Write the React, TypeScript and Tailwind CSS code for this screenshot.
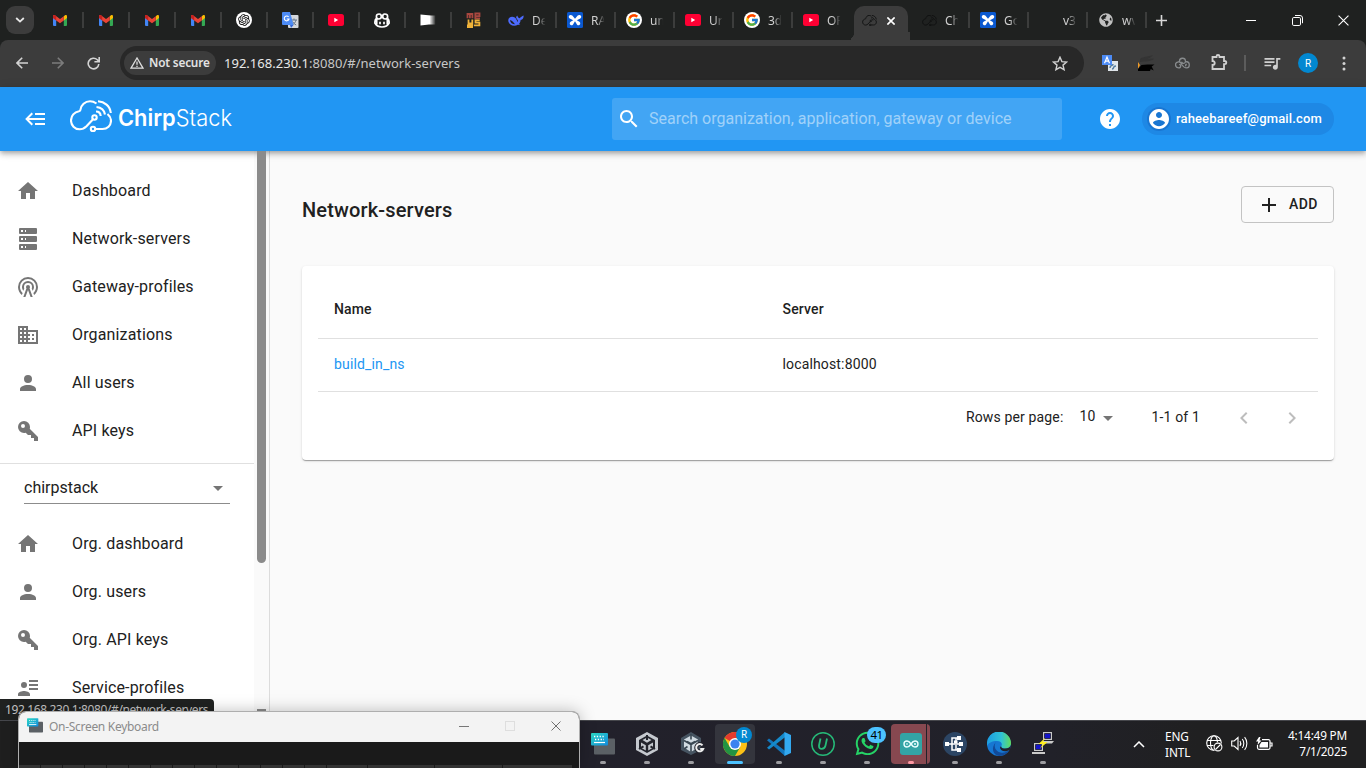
import React from "react";
import { FcGoogle } from "react-icons/fc";
import { FaWhatsapp, FaGlobeAmericas } from "react-icons/fa";
import { MdQueueMusic } from "react-icons/md";
import { RiOpenaiFill } from "react-icons/ri";

/* ---------- Material glyphs ---------- */

const paths = {
  home: "M10 20v-6h4v6h5v-8h3L12 3 2 12h3v8z",
  server:
    "M4,1H20A1,1 0 0,1 21,2V6A1,1 0 0,1 20,7H4A1,1 0 0,1 3,6V2A1,1 0 0,1 4,1M4,9H20A1,1 0 0,1 21,10V14A1,1 0 0,1 20,15H4A1,1 0 0,1 3,14V10A1,1 0 0,1 4,9M4,17H20A1,1 0 0,1 21,18V22A1,1 0 0,1 20,23H4A1,1 0 0,1 3,22V18A1,1 0 0,1 4,17M9,5H10V3H9V5M9,13H10V11H9V13M9,21H10V19H9V21M5,3V5H7V3H5M5,11V13H7V11H5M5,19V21H7V19H5Z",
  tower:
    "M12,10A2,2 0 0,1 14,12C14,12.5 13.82,12.94 13.53,13.29L16.7,22H14.57L12,14.93L9.43,22H7.3L10.47,13.29C10.18,12.94 10,12.5 10,12A2,2 0 0,1 12,10M12,8A4,4 0 0,0 8,12C8,12.5 8.1,13 8.28,13.46L7.4,15.86C6.53,14.81 6,13.47 6,12A6,6 0 0,1 12,6A6,6 0 0,1 18,12C18,13.47 17.47,14.81 16.6,15.86L15.72,13.46C15.9,13 16,12.5 16,12A4,4 0 0,0 12,8M12,4A8,8 0 0,0 4,12C4,14.36 5,16.5 6.64,17.94L5.92,19.94C3.54,18.11 2,15.23 2,12A10,10 0 0,1 12,2A10,10 0 0,1 22,12C22,15.23 20.46,18.11 18.08,19.94L17.36,17.94C19,16.5 20,14.36 20,12A8,8 0 0,0 12,4Z",
  domain:
    "M12 7V3H2v18h20V7H12zM6 19H4v-2h2v2zm0-4H4v-2h2v2zm0-4H4V9h2v2zm0-4H4V5h2v2zm4 12H8v-2h2v2zm0-4H8v-2h2v2zm0-4H8V9h2v2zm0-4H8V5h2v2zm10 12h-8v-2h2v-2h-2v-2h2v-2h-2V9h8v10zm-2-8h-2v2h2v-2zm0 4h-2v2h2v-2z",
  account:
    "M12,4A4,4 0 0,1 16,8A4,4 0 0,1 12,12A4,4 0 0,1 8,8A4,4 0 0,1 12,4M12,14C16.42,14 20,15.79 20,18V20H4V18C4,15.79 7.58,14 12,14Z",
  key: "M22,18V22H18V19H15V16H12L9.74,13.74C9.19,13.91 8.61,14 8,14A6,6 0 0,1 2,8A6,6 0 0,1 8,2A6,6 0 0,1 14,8C14,8.61 13.91,9.19 13.74,9.74L22,18M7,5A2,2 0 0,0 5,7A2,2 0 0,0 7,9A2,2 0 0,0 9,7A2,2 0 0,0 7,5Z",
  details:
    "M13,4H22V6H13V4M13,8H22V10H13V8M13,12H22V14H13V12M8,6A3,3 0 1,1 8,12A3,3 0 1,1 8,6M14,20H2V18C2,16 6,14.9 8,14.9C10,14.9 14,16 14,18V20Z",
  backburger:
    "M5,13L9,17L7.6,18.42L1.18,12L7.6,5.58L9,7L5,11H21V13H5M21,6V8H11V6H21M21,16V18H11V16H21Z",
  search:
    "M15.5 14h-.79l-.28-.27C15.41 12.59 16 11.11 16 9.5 16 5.91 13.09 3 9.5 3S3 5.91 3 9.5 5.91 16 9.5 16c1.61 0 3.09-.59 4.23-1.57l.27.28v.79l5 4.99L20.49 19l-4.99-5zm-6 0C7.01 14 5 11.99 5 9.5S7.01 5 9.5 5 14 7.01 14 9.5 11.99 14 9.5 14z",
  help: "M12 2C6.48 2 2 6.48 2 12s4.48 10 10 10 10-4.48 10-10S17.52 2 12 2zm1 17h-2v-2h2v2zm2.07-7.75l-.9.92C13.45 12.9 13 13.5 13 15h-2v-.5c0-1.1.45-2.1 1.17-2.83l1.24-1.26c.37-.36.59-.86.59-1.41 0-1.1-.9-2-2-2s-2 .9-2 2H8c0-2.21 1.79-4 4-4s4 1.79 4 4c0 .88-.36 1.68-.93 2.25z",
  avatar:
    "M12 2C6.48 2 2 6.48 2 12s4.48 10 10 10 10-4.48 10-10S17.52 2 12 2zm0 3c1.66 0 3 1.34 3 3s-1.34 3-3 3-3-1.34-3-3 1.34-3 3-3zm0 14.2c-2.5 0-4.71-1.28-6-3.22.03-1.99 4-3.08 6-3.08 1.99 0 5.97 1.09 6 3.08-1.29 1.94-3.5 3.22-6 3.22z",
  plus: "M19,13H13V19H11V13H5V11H11V5H13V11H19V13Z",
  drop: "M7 10l5 5 5-5z",
  left: "M15.41 7.41L14 6l-6 6 6 6 1.41-1.41L10.83 12z",
  right: "M10 6L8.59 7.41 13.17 12l-4.58 4.59L10 18l6-6z",
};

function Glyph({ name, className = "" }: { name: keyof typeof paths; className?: string }) {
  return (
    <svg viewBox="0 0 24 24" className={`shrink-0 fill-current ${className}`}>
      <path d={paths[name]} fillRule="evenodd" />
    </svg>
  );
}

/* ---------- Favicons ---------- */

const Gmail = () => (
  <svg width="14" height="11" viewBox="0 0 14 11">
    <path d="M0 1.5V10a1 1 0 0 0 1 1h2.2V4z" fill="#4285f4" />
    <path d="M14 1.5V10a1 1 0 0 1-1 1h-2.2V4z" fill="#34a853" />
    <path d="M10.8 1.2 12 .3c.9-.6 2 0 2 1.100v1.500l-3.200 2.500z" fill="#fbbc04" />
    <path d="M0 2.900V1.400C0 .3 1.200-.3 2 .3l5 3.800 3.800-2.900v4.200L7 8.300l-3.800-2.900z" fill="#ea4335" />
    <path d="M0 2.900V1.400C0 .3 1.200-.3 2 .3l1.200.9v4.200z" fill="#c5221f" />
  </svg>
);
const OpenAi = () => (
  <span className="flex size-4 items-center justify-center rounded-full bg-white text-black">
    <RiOpenaiFill size={14} />
  </span>
);
const Translate = () => (
  <svg width="17" height="16" viewBox="0 0 17 16">
    <rect x="6" y="3" width="10.500" height="13" rx="1" fill="#d5d8dc" />
    <path d="M9 8h6M12 6.500V8M14 8c-.5 2.500-2 4-4 5M10.500 9.500c.8 1.500 2 2.700 3.700 3.500" stroke="#66768a" fill="none" />
    <path d="M1 0h7l3.500 13H1a1 1 0 0 1-1-1V1a1 1 0 0 1 1-1z" fill="#4c8bf5" />
    <path d="M8 13h3.500L9 16z" fill="#3367d6" />
    <path d="M6.600 5A2.400 2.400 0 1 0 7 7H4.800" stroke="#fff" strokeWidth="1.100" fill="none" />
  </svg>
);
const YouTube = () => (
  <svg width="16" height="12" viewBox="0 0 16 12">
    <rect width="16" height="12" rx="2.500" fill="#ff0033" />
    <path d="M6.300 3.700v4.600L10.200 6z" fill="#fff" />
  </svg>
);
const Copilot = () => (
  <svg width="16" height="15" viewBox="0 0 16 15" fill="none" stroke="#fff" strokeWidth="1.700">
    <path d="M7.300 3.500C7.300 5.300 6.500 6 4.800 6 3 6 2.400 5.300 2.400 3.700 2.400 1.800 3.300 1 5.200 1 6.700 1 7.300 1.700 7.300 3.500zM8.700 3.500C8.700 5.300 9.500 6 11.200 6c1.800 0 2.400-.7 2.400-2.300C13.600 1.800 12.700 1 10.800 1 9.300 1 8.700 1.700 8.700 3.500z" />
    <path d="M2.500 5.500C1.300 6.500.9 7.500.9 9v1.200C2 12.500 5 14 8 14s6-1.500 7.100-3.800V9c0-1.500-.4-2.500-1.600-3.500M2.700 6v5.500M13.300 6v5.500" />
    <path d="M6 8.800v2.400M10 8.800v2.400" />
  </svg>
);
const Flag = () => (
  <svg width="16" height="12" viewBox="0 0 16 12">
    <defs>
      <linearGradient id="flag">
        <stop offset=".6" stopColor="#fff" />
        <stop offset="1" stopColor="#fff" stopOpacity="0.05" />
      </linearGradient>
    </defs>
    <path d="M.5.500 11 1.500h4.500v9H9l-8.500 1z" fill="url(#flag)" />
  </svg>
);
const Meys = () => (
  <svg width="16" height="16" viewBox="0 0 16 16" fill="none" strokeWidth="1.800">
    <path d="M1.500 6.300V2h2.400v4.300M3.900 2h2.500v4.300M9 4.200h4.500V1.500H9.300v4.800h4.700" stroke="#a8473f" />
    <path d="M2.500 7.500v4h3.800M6.300 7.500v5.800H1M13.700 8.300H9.500v2.300h3.900v2.700H8M1 15.200h6" stroke="#efb239" />
  </svg>
);
const Whale = () => (
  <svg width="16" height="13" viewBox="0 0 17 13" fill="#4d6bfe">
    <path d="M10 1.200c.3 1.800 1.200 2.800 2.700 3C13.300 2.700 15 2.300 16.600 1.300c0 2.600-.7 4.400-3.200 4.700-.1 2-.8 3.200-1.800 4.200l1.500 1.200-2.600-.3C6 13.200 1.300 11.500.4 7.500-.4 3.600 3.500 1 7.200 3.200 9 4.500 9.500 6.500 10.300 8c1.200-1.700-1.600-3.200-1.700-4.900C8.700 2.100 9.500 1.900 10 1.200zM2.100 6c.3 3 2.500 4.600 5.400 4.600C5.900 8.800 4.900 6.500 2.100 6z" fillRule="evenodd" />
  </svg>
);
const Butterfly = () => (
  <svg width="16" height="16" viewBox="0 0 16 16">
    <rect width="16" height="16" rx="1.500" fill="#0a58d0" />
    <path d="M8 6.800 5.300 3.600A2 2 0 1 0 3.200 6.800L6.200 8.300 3.600 9.800A1.900 1.900 0 1 0 6.500 11.800L8 9.200l1.500 2.600a1.900 1.900 0 1 0 2.900-2L9.800 8.300l3-1.500A2 2 0 1 0 10.700 3.600z" fill="#fff" />
  </svg>
);
const GoogleG = () => (
  <span className="flex size-4 items-center justify-center rounded-full bg-white">
    <FcGoogle size={14} />
  </span>
);
const CloudMark = ({ className, width = 1.200 }: { className: string; width?: number }) => (
  <svg viewBox="0 0 42 32" className={className} fill="none" stroke="currentColor" strokeWidth={width} strokeLinecap="butt">
    <path d="M26.500 3.500C24 1.700 21.800 1.200 20 1.200c-5 0-9 3.800-9.500 8.300 0 1-.3 1.500-1.500 1.800C4.300 12 1 15.800 1 20.500s3.700 8.800 8.700 8.800c3 0 5-1.200 6.800-3l6.300-6.800" />
    <circle cx="24.500" cy="17.500" r="2.200" />
    <circle cx="23" cy="29" r="2.200" />
    <path d="M25.500 29H32.500c4.800 0 8.500-3.500 8.500-8.200 0-3-1.300-5-3.500-6.800M26 11.500c3 0 4.500 1.800 4.700 4.500M26.500 7c5 .5 7.800 3.500 8.500 7.500M28 1.300c6.500.500 12 4.500 12.800 11.700" />
  </svg>
);
const DarkCloud = () => <CloudMark className="h-[11px] w-[15px] text-[#101111]" width={2.600} />;
const Blank = () => <span className="size-4" />;
const Earth = () => <FaGlobeAmericas size={14} color="#c0c0c0" />;

type Tab = { icon: () => React.ReactElement; label: string; active?: boolean };
const pinned = [Gmail, Gmail, Gmail, Gmail, OpenAi, Translate, YouTube, Copilot, Flag, Meys];
const tabs: Tab[] = [
  { icon: Whale, label: "De" },
  { icon: Butterfly, label: "RA" },
  { icon: GoogleG, label: "un" },
  { icon: YouTube, label: "Ur" },
  { icon: GoogleG, label: "3d" },
  { icon: YouTube, label: "OF" },
  { icon: DarkCloud, label: "", active: true },
  { icon: DarkCloud, label: "Ch" },
  { icon: Butterfly, label: "Go" },
  { icon: Blank, label: "v3" },
  { icon: Earth, label: "wv" },
];

const Cross = ({ className = "" }: { className?: string }) => (
  <svg viewBox="0 0 10 10" className={className} stroke="currentColor" fill="none">
    <path d="M.5.500l9 9M9.500.500l-9 9" />
  </svg>
);

function TabStrip() {
  return (
    <div className="flex h-10 bg-[#1f2120] text-[#d0d0d0]">
      <div className="flex w-[37px] pl-1.5 pt-1.5">
        <div className="flex size-7 items-center justify-center rounded-[9px] bg-[#3c3c3c]">
          <svg width="10" height="6" viewBox="0 0 10 6" fill="none" stroke="#e8e8e8" strokeWidth="1.800">
            <path d="M1.200 1 5 4.600 8.800 1" />
          </svg>
        </div>
      </div>
      {pinned.map((Icon, i) => (
        <div key={i} className="flex h-10 w-[46px] items-center">
          <div className="flex w-[45px] shrink-0 items-center justify-center pl-px">
            <Icon />
          </div>
          <div className="h-4 w-0.5 shrink-0 bg-[#3c3d3c]" />
        </div>
      ))}
      {tabs.map(({ icon: Icon, label, active }, i) =>
        active ? (
          <div key={i} className="flex w-[59px] items-end">
            <div className="h-2 w-[3px] shrink-0 bg-[radial-gradient(circle_at_-5px_0px,#1f2120_8px,#3c3c3c_8.5px)]" />
            <div className="flex h-[34px] w-[54px] shrink-0 items-center rounded-t-[10px] bg-[#3c3c3c] pb-1.5 pl-2 pt-0">
              <Icon />
              <Cross className="ml-2.5 mt-0.5 size-2 text-white stroke-[2]" />
            </div>
            <div className="h-2 w-0.5 shrink-0 bg-[#3c3c3c]" />
          </div>
        ) : (
          <div key={i} className="flex w-[59px] items-center pl-[11px]">
            <div className="flex w-4 shrink-0 justify-center">
              <Icon />
            </div>
            <div className="ml-2 w-4 whitespace-nowrap pt-px font-['Noto_Sans',sans-serif] text-xs [mask-image:linear-gradient(to_right,black_35%,transparent_85%)]">
              {label}
            </div>
            {tabs[i + 1]?.active ? null : <div className="-mr-px ml-auto h-4 w-0.5 shrink-0 bg-[#3c3d3c]" />}
          </div>
        )
      )}
      <div className="flex w-[30px] items-center justify-center">
        <svg width="11" height="11" viewBox="0 0 11 11" stroke="#d8d8d8" strokeWidth="1.600">
          <path d="M5.500 0v11M0 5.500h11" />
        </svg>
      </div>
      <div className="ml-auto flex w-[138px] items-center">
        <div className="flex w-[46px] justify-center">
          <div className="h-px w-2.5 bg-white" />
        </div>
        <div className="flex w-[46px] justify-center">
          <svg width="11" height="11" viewBox="0 0 11 11" fill="none" stroke="#fff">
            <rect x=".5" y="2.500" width="8" height="8" rx="1.300" />
            <path d="M3 .5h5a2.500 2.500 0 0 1 2.500 2.500v5.200" />
          </svg>
        </div>
        <div className="flex w-[46px] justify-center">
          <Cross className="size-[11px] text-white" />
        </div>
      </div>
    </div>
  );
}

function Toolbar() {
  return (
    <div className="bg-[#1f2120]">
      <div className="flex h-[47px] items-center rounded-t-lg bg-[#3c3c3c] pb-px">
        <div className="flex w-[120px] items-center pl-4">
          <svg width="12" height="12" viewBox="0 0 12 12" fill="none" stroke="#d3d3d3" strokeWidth="1.600">
            <path d="M12 6H1M6.200.800 1 6l5.200 5.200" />
          </svg>
          <svg width="12" height="12" viewBox="0 0 12 12" fill="none" stroke="#7c7c7c" strokeWidth="1.600" className="ml-6">
            <path d="M0 6h11M5.800.800 11 6l-5.200 5.200" />
          </svg>
          <svg width="13" height="13" viewBox="0 0 13 13" fill="none" stroke="#d3d3d3" strokeWidth="1.600" className="ml-[23px]">
            <path d="M11.800 7A5.300 5.300 0 1 1 10.300 2.800L12 4.500M12.200 0v4.800H7.400" />
          </svg>
        </div>
        <div className="flex h-[34px] w-[964px] items-center rounded-full bg-[#282828] pl-1 pr-4 font-['Noto_Sans',sans-serif]">
          <div className="flex h-6 w-[92px] items-center rounded-full bg-[#3c3c3c] pl-[6px]">
            <svg width="14" height="12" viewBox="0 0 14 12" fill="none" stroke="#dedede" strokeWidth="1.300">
              <path d="M7 1 1 11.200h12zM7 4.500v3.300M7 8.800v1.200" />
            </svg>
            <span className="ml-[5px] whitespace-nowrap text-[11.800px] font-semibold tracking-[-0.18px] text-[#e3e3e3]">Not secure</span>
          </div>
          <div className="ml-2 mt-0.5 whitespace-nowrap text-[13px] tracking-[0.02px] text-[#c7c7c7]">
            <span className="text-[#e8e8e8]">192.168.230.1</span>:8080/#/network-servers
          </div>
          <svg width="16" height="15" viewBox="0 0 16 15" fill="none" stroke="#d0d0d0" strokeWidth="1.400" className="ml-auto">
            <path d="M8 1.200 9.900 5.600l4.700.4-3.600 3.100 1.100 4.600L8 11.300l-4.100 2.400L5 9.100 1.400 6l4.700-.4z" />
          </svg>
        </div>
        <div className="flex grow items-center pl-[18px]">
          <svg width="16" height="17" viewBox="0 0 16 17">
            <rect x="6" y="6" width="10" height="10" fill="#dfe5ea" />
            <path d="M8 13c0-4 3-1 3-4M10 14c3 0 0-3 4-3" stroke="#527ca0" strokeWidth="1.500" fill="none" />
            <rect width="10" height="10" fill="#4c8bf5" />
            <path d="M2.500 8.200 5 2l2.500 6.200M3.400 6.200h3.200" stroke="#fff" strokeWidth="1.200" fill="none" />
          </svg>
          <svg width="17" height="16" viewBox="0 0 17 16" className="ml-5">
            <path d="M2 4c3-3 9-2 13-4-2 3-4 3-6 4 3 0 6-1 7 0-4 3-9 2-14 3z" fill="#343434" />
            <path d="M0 7l2 3-2 4z" fill="#f09a25" />
            <path d="M0 16V14L3.500 10l6-.500 7 0-2.800 2 2 4-3-1.500-.7 2z" fill="#000" />
          </svg>
          <svg width="15" height="12" viewBox="0 0 15 12" fill="none" stroke="#888b8d" strokeWidth="1.300" className="ml-5">
            <path d="M6.500 7.500a3 3 0 1 0-3 3.300c1.500 0 2.200-.8 2.200-1.900 0-1-.8-1.500-1.600-1.300M4.500 4.500A3 3 0 0 1 10.500 4c0 1.600-1 2.500-2.200 2.400-1 0-1.500-.9-1.200-1.700M10.500 4.500c2 0 3.800 1.400 3.800 3.500 0 1.700-1.200 2.900-2.700 2.900-1.500 0-3.500-1.200-5-3.400M11.800 7.500c-1.200-.2-1.600 1.200-.6 1.500" />
          </svg>
          <svg width="17" height="16" viewBox="0 0 17 16" fill="none" stroke="#d0d0d0" strokeWidth="1.800" className="-mt-0.5 ml-[21px]">
            <path d="M1.500 3h4v-.5a1.500 1.500 0 0 1 3 0V3h4.500v4h.7a1.600 1.600 0 0 1 0 3.200H13V15H1.500v-4C4.500 11 4.500 7 1.500 7z" />
          </svg>
          <div className="ml-4 h-4 w-0.5 bg-[#5c5c5c]" />
          <MdQueueMusic size={20} color="#d0d0d0" className="ml-4" />
          <div className="ml-4 flex size-5 items-center justify-center rounded-full bg-[#0288d1] font-['Roboto',sans-serif] text-[10px] text-white">R</div>
          <svg width="4" height="15" viewBox="0 0 4 15" fill="#d3d3d3" className="ml-6">
            <circle cx="2" cy="2" r="1.500" />
            <circle cx="2" cy="7.500" r="1.500" />
            <circle cx="2" cy="13" r="1.500" />
          </svg>
        </div>
      </div>
    </div>
  );
}

/* ---------- ChirpStack application ---------- */

function AppBar() {
  return (
    <header className="relative z-10 flex h-16 items-center bg-[#2196f3] pl-6 text-white shadow-[0_2px_4px_-1px_rgba(0,0,0,.2),0_4px_5px_rgba(0,0,0,.14),0_1px_10px_rgba(0,0,0,.12)]">
      <Glyph name="backburger" className="size-6" />
      <div className="-mt-1.5 ml-[22px] flex items-center">
        <CloudMark className="h-8 w-[42px]" width={2.1} />
        <svg width="116" height="30" viewBox="0 0 116 30" className="ml-1.5 mt-1.5 fill-white font-['Inter',sans-serif]">
          <text x="0" y="22" fontSize="23" textLength="114" lengthAdjust="spacingAndGlyphs">
            <tspan fontWeight="600">Chirp</tspan>
            <tspan fontWeight="300">Stack</tspan>
          </text>
        </svg>
      </div>
      <div className="ml-auto mr-9 flex h-[42px] w-[450px] items-center rounded-[3px] bg-white/15 pl-[5px]">
        <Glyph name="search" className="size-6" />
        <span className="ml-2 whitespace-nowrap text-base text-white/50">Search organization, application, gateway or device</span>
      </div>
      <Glyph name="help" className="mr-5 size-6" />
      <div className="mr-8 flex h-8 w-[192px] items-center rounded-full bg-[#1e88e5] pl-[5px]">
        <Glyph name="avatar" className="size-6 rounded-full bg-[#1976d2]" />
        <span className="ml-[5px] whitespace-nowrap text-[13px] font-medium tracking-[0.14px]">raheebareef@gmail.com</span>
      </div>
    </header>
  );
}

const globalLinks: { icon: keyof typeof paths; label: string }[] = [
  { icon: "home", label: "Dashboard" },
  { icon: "server", label: "Network-servers" },
  { icon: "tower", label: "Gateway-profiles" },
  { icon: "domain", label: "Organizations" },
  { icon: "account", label: "All users" },
  { icon: "key", label: "API keys" },
];
const orgLinks: { icon: keyof typeof paths; label: string }[] = [
  { icon: "home", label: "Org. dashboard" },
  { icon: "account", label: "Org. users" },
  { icon: "key", label: "Org. API keys" },
  { icon: "details", label: "Service-profiles" },
];

function LinkList({ items }: { items: typeof globalLinks }) {
  return (
    <ul>
      {items.map((it) => (
        <li key={it.label} className="flex h-12 items-center pl-4">
          <Glyph name={it.icon} className="size-6 text-[#757575]" />
          <span className="ml-8 text-base tracking-[0.15px]">{it.label}</span>
        </li>
      ))}
    </ul>
  );
}

function Sidebar() {
  return (
    <nav className="flex h-[617px] w-[270px] shrink-0 overflow-hidden border-r border-[#dcdcdc] bg-white">
      <div className="w-[254px]">
        <div className="h-[313px] border-b border-[#e0e0e0] pt-4">
          <LinkList items={globalLinks} />
        </div>
        <div className="ml-6 flex h-10 w-[206px] items-center justify-between border-b border-[#8c8c8c] pt-[9px]">
          <span className="text-base tracking-normal">chirpstack</span>
          <Glyph name="drop" className="-mt-px size-6 text-[#757575]" />
        </div>
        <div className="pt-4">
          <LinkList items={orgLinks} />
        </div>
      </div>
      <div className="flex w-[15px] flex-col items-center bg-[#fafafa]">
        <div className="relative z-20 h-[412px] w-[9px] rounded-b-full bg-[#8b8b8b]" />
        <div className="mt-[146px] h-2 w-[9px] bg-[#8b8b8b]" />
      </div>
    </nav>
  );
}

function Content() {
  return (
    <main className="flex grow flex-col bg-[#fafafa] px-8 pt-[35px]">
      <div className="flex h-[37px] justify-between">
        <h1 className="mt-2 text-xl font-medium leading-8 tracking-[0.15px]">Network-servers</h1>
        <button className="flex h-[37px] w-[93px] items-center rounded border border-[#c3c3c3] pl-[15px] text-sm font-medium tracking-[0.4px]">
          <Glyph name="plus" className="mr-2 size-6" />
          <span className="-mt-0.5">ADD</span>
        </button>
      </div>
      <section className="mt-[43px] h-[194px] rounded bg-white p-4 text-sm tracking-[0.15px] shadow-[0_2px_1px_-1px_rgba(0,0,0,.2),0_1px_1px_rgba(0,0,0,.14),0_1px_3px_rgba(0,0,0,.12)]">
        <div className="flex h-[57px] items-center border-b border-[#e0e0e0] pl-4 pb-[3px] font-medium">
          <span className="w-[448.5px]">Name</span>
          <span>Server</span>
        </div>
        <div className="flex h-[53px] items-center border-b border-[#e0e0e0] pl-4 pb-0.5">
          <a className="w-[448.5px] text-[#2196f3]">build_in_ns</a>
          <span>localhost:8000</span>
        </div>
        <div className="flex h-[52px] items-center justify-end pb-[3px] pr-[14px]">
          <span>Rows per page:</span>
          <span className="ml-4 -mt-0.5">10</span>
          <Glyph name="drop" className="mt-0.5 size-6 text-[#757575]" />
          <span className="ml-[32px]">1-1 of 1</span>
          <Glyph name="left" className="ml-8 mt-0.5 size-6 text-[#bdbdbd]" />
          <Glyph name="right" className="ml-6 mt-0.5 size-6 text-[#bdbdbd]" />
        </div>
      </section>
    </main>
  );
}

/* ---------- Windows shell ---------- */

const KeyboardIcon = ({ className }: { className: string }) => (
  <svg viewBox="0 0 24 22" className={className}>
    <defs>
      <linearGradient id="kb" x1="0" x2="1" y1="0" y2="1">
        <stop stopColor="#2bd9c3" />
        <stop offset="1" stopColor="#1389dd" />
      </linearGradient>
    </defs>
    <rect x="3" y="5.500" width="21" height="16" rx="1" fill="#5b6065" />
    <rect width="17" height="12.500" rx="1" fill="url(#kb)" />
    <path d="M3 3.500h11M4 6.500h9" stroke="#fff" strokeWidth="1.300" strokeDasharray="1.300 1.500" />
    <path d="M3 9.500h11" stroke="#fff" strokeWidth="1.200" />
  </svg>
);
const Cube = () => (
  <svg width="22" height="24" viewBox="0 0 22 24">
    <path d="M11 0 22 6v12l-11 6L0 18V6z" fill="#c5c9cf" />
    <path d="M11 3.500 19 8v8.500L11 21l-8-4.500V8z" fill="#23252d" />
    <path d="M11 5.500 15.500 8 11 10.800 6.500 8zM5 10.500 9.800 13.300v5.200L5 15.800zM17 10.500l-4.800 2.800v5.200L17 15.800z" fill="#c5c9cf" />
    <path d="M11 3v5M3 17l4.500-2.700M19 17l-4.500-2.700" stroke="#23252d" strokeWidth="2" />
  </svg>
);
const CubeG = () => (
  <svg width="24" height="24" viewBox="0 0 24 24" className="ml-1">
    <path d="M10 0 20 6v12l-10 5L0 18V6z" fill="#465461" />
    <path d="M10 3.500 17 7.500v8L10 20l-7-4.500v-8z" fill="#d1dbe2" />
    <path d="M10 2v5.500M10 20v-7M3 8.500l7 4 7-4M3 17l3.500-2.500M6 9.500l4 2.300 4-2.300" stroke="#3a4853" strokeWidth="1.600" fill="none" />
    <path d="M21.500 13.300a3.600 3.600 0 1 0 .7 3.700h-3" stroke="#252730" strokeWidth="4" fill="none" />
    <path d="M21.500 13.300a3.600 3.600 0 1 0 .7 3.700h-3" stroke="#eee" strokeWidth="2" fill="none" />
  </svg>
);
const Chrome = () => (
  <svg width="24" height="24" viewBox="0 0 24 24">
    <circle cx="12" cy="12" r="12" fill="#fbc116" />
    <path d="M12 12 1.600 6A12 12 0 0 1 22.400 6H12z" fill="#e33b2e" />
    <path d="M1.600 6A12 12 0 0 0 12 24l5.200-9L12 12 6.800 15z" fill="#229342" />
    <circle cx="12" cy="12" r="6" fill="#fff" />
    <circle cx="12" cy="12" r="4.600" fill="#3b82f0" />
  </svg>
);
const VsCode = () => (
  <svg width="24" height="24" viewBox="0 0 24 24">
    <path d="M0 8.300 2 6.500l16 12.200V24z" fill="#1276bd" />
    <path d="M0 15.700 2 17.500 18 5.300V0z" fill="#158acb" />
    <path d="M17.500 0 24 3v18l-6.500 3z" fill="#33a9f0" />
  </svg>
);
const UCircle = () => (
  <svg width="24" height="24" viewBox="0 0 24 24" fill="none">
    <circle cx="12" cy="12" r="11.200" stroke="#26b978" strokeWidth="1.500" />
    <path d="M9.500 6.500 8 13.500c-.6 4.500 5.500 4.500 6.500 0L16 6.500" stroke="#26b978" strokeWidth="1.800" />
  </svg>
);
const Arduino = () => (
  <svg width="22" height="22" viewBox="0 0 22 22" fill="none">
    <rect width="22" height="22" rx="3" fill="#33a4a5" />
    <path d="M11 11C9.500 8.700 8.300 8 7 8a3 3 0 0 0 0 6c1.300 0 2.500-.7 4-3s2.700-3 4-3a3 3 0 0 1 0 6c-1.300 0-2.500-.7-4-3z" stroke="#e9ffff" strokeWidth="1.400" />
    <path d="M6 11h2M14 11h2M15 10v2" stroke="#e9ffff" />
  </svg>
);
const Network = () => (
  <svg width="24" height="24" viewBox="0 0 24 24">
    <circle cx="12" cy="12" r="12" fill="#2c4564" />
    <path d="M5 12h13M9 12V6h7M9 12v6h7M13 6v5M13 18v-5" stroke="#fff" strokeWidth="1.500" fill="none" />
    <path d="M2 10h4v4H2zM14 4h4v4h-4zM16 10h4v4h-4zM14 16h4v4h-4zM11 8.500h3.500v3H11z" fill="#fff" />
  </svg>
);
const Edge = () => (
  <svg width="24" height="24" viewBox="0 0 24 24">
    <defs>
      <linearGradient id="ed" x1="0" x2="1">
        <stop stopColor="#1b9de2" />
        <stop offset=".6" stopColor="#2fc2d6" />
        <stop offset="1" stopColor="#62db5b" />
      </linearGradient>
    </defs>
    <circle cx="12" cy="12" r="12" fill="#1677d2" />
    <path d="M0 12A12 12 0 0 1 24 11c0 4-3 5.500-6 5.500-3.500 0-4.500-1.500-3.500-3 1-2-.5-4.500-4.500-4.500C5 9 1 11 0 14z" fill="url(#ed)" />
    <path d="M9 10c-3 4-.5 9.500 4.500 10.500 3.500.7 6.500-.5 8.800-2.500A12 12 0 0 1 12 24C6 23 3.500 16 9 10z" fill="#114a99" />
    <path d="M14.500 13.500c-1 1.500 0 3 3.500 3 3 0 5.200-1 6-3.500l-.8 4.500c-4 3-10 2-10.200-2z" fill="#222229" />
  </svg>
);
const Putty = () => (
  <svg width="23" height="23" viewBox="0 0 23 23">
    <path d="M11 0h9v8h-9zM10 9h12l-2 2.500h-9zM2 11h9v8H2zM0 20h13v2H0z" fill="#c9c9c9" />
    <path d="M12.500 1.500H18.500v5h-6zM3.500 12.500h6v5h-6z" fill="#1414c8" stroke="#000" strokeWidth=".6" />
    <path d="M13 6 6.500 12H11L8 16.500l7.500-6.500H11z" fill="#ffee20" />
  </svg>
);

function TaskItem({ children, active = false }: { children: React.ReactNode; active?: boolean }) {
  return (
    <div className="flex h-12 w-11 flex-col items-center pt-[3px]">
      <div className={`relative flex h-10 w-10 items-center justify-center rounded ${active ? "bg-[#34353d]" : ""}`}>
        {children}
        <span className={`absolute bottom-0 h-[3px] rounded-full ${active ? "w-4 bg-[#4cc2ff]" : "w-1.5 bg-[#9c9ca0]"}`} />
      </div>
    </div>
  );
}

function Taskbar() {
  return (
    <footer className="absolute bottom-0 left-0 z-30 flex h-12 w-[1366px] items-center border-t border-[#46474c] bg-[linear-gradient(to_right,#1f1f1f_0px,#1f1f1f_19px,#22212b_579px,#212129_1050px,#202021_1200px)] pl-[581px] font-['Noto_Sans',sans-serif] text-white">
      <TaskItem><KeyboardIcon className="h-[22px] w-6" /></TaskItem>
      <TaskItem><Cube /></TaskItem>
      <TaskItem><CubeG /></TaskItem>
      <TaskItem active>
        <Chrome />
        <span className="absolute right-[3px] top-[3px] flex size-4 items-center justify-center rounded-full bg-[#0288d1] text-[10px]">R</span>
      </TaskItem>
      <TaskItem><VsCode /></TaskItem>
      <TaskItem><UCircle /></TaskItem>
      <TaskItem>
        <FaWhatsapp size={27} color="#25d366" />
        <span className="absolute right-px top-[3px] flex h-4 w-[19px] items-center justify-center rounded-full bg-[#4cc2ff] text-[11.500px] tracking-[-0.5px] text-black">41</span>
      </TaskItem>
      <div className="flex h-12 w-11 pl-0.5 pt-[3px]">
        <div className="relative flex h-10 w-[39px] shrink-0 items-center justify-center rounded bg-[linear-gradient(to_right,#874850_0px,#874850_35px,#222129_35px,#222129_36px,#874850_36px)]">
          <Arduino />
          <span className="absolute bottom-0 left-[17px] h-[3px] w-1.5 rounded-full bg-[#ff99a4]" />
        </div>
      </div>
      <TaskItem><Network /></TaskItem>
      <TaskItem><Edge /></TaskItem>
      <TaskItem><Putty /></TaskItem>
      <svg width="12" height="7" viewBox="0 0 12 7" fill="none" stroke="#fff" strokeWidth="1.500" className="ml-[68px]">
        <path d="M1 6l5-5 5 5" />
      </svg>
      <div className="-mt-0.5 ml-5 text-[11.800px] leading-4 tracking-[-0.1px]">
        <div>ENG</div>
        <div>INTL</div>
      </div>
      <div className="-mt-0.5 ml-auto flex items-center gap-2">
        <svg width="17" height="17" viewBox="0 0 17 17" fill="none" stroke="#fff" strokeWidth="1.100">
          <circle cx="8" cy="8" r="7.300" />
          <ellipse cx="8" cy="8" rx="3.500" ry="7.300" />
          <path d="M1 5.500h14M1 10.500h7" />
          <circle cx="12" cy="12" r="4.800" fill="#202021" stroke="none" />
          <circle cx="12" cy="12" r="3.900" />
          <path d="M9.500 14.500l5-5" />
        </svg>
        <svg width="17" height="15" viewBox="0 0 17 15" fill="none" stroke="#fff" strokeWidth="1.100">
          <path d="M.7 5h2.500L7 1.500v12L3.200 10H.7zM9 5c1 1.500 1 3.500 0 5M11.300 3c2 2.500 2 6.500 0 9M13.600 1.200c3 3.500 3 9 0 12.600" />
        </svg>
        <svg width="17" height="14" viewBox="0 0 17 14" fill="none" stroke="#fff" strokeWidth="1.200">
          <path d="M6 2.700h6.500a1.500 1.500 0 0 1 1.500 1.500v6.600a1.500 1.500 0 0 1-1.500 1.500H3a1.500 1.500 0 0 1-1.500-1.500V8M14.500 6H16v3h-1.500" />
          <path d="M5.500 5H12v5.500H3.500V8z" fill="#fff" stroke="none" />
          <path d="M3 0 0 4.500h2.200L1.500 8 5.500 3.500H3.500L4.500 0z" fill="#fff" stroke="none" />
        </svg>
      </div>
      <div className="-mt-[3px] ml-[15px] mr-[19px] text-right text-[11.800px] leading-4 tracking-[-0.2px]">
        <div>4:14:49 PM</div>
        <div>7/1/2025</div>
      </div>
    </footer>
  );
}

const keyWidths = [21, 21, 21, 21, 21, 21, 21, 21, 21, 21, 21, 21, 21, 21, 40, 66, 67, 69];

function ScreenKeyboard() {
  return (
    <div className="absolute left-[18px] top-[711px] z-40 flex h-[57px] w-[562px] flex-col overflow-hidden rounded-t-lg border border-b-0 border-[#aeaeae] bg-[#1a1a1a] shadow-[0_0_16px_rgba(0,0,0,.25)]">
      <div className="flex h-[30px] shrink-0 items-center bg-[#f3f3f3] pl-2 pr-[18px] font-['Noto_Sans',sans-serif] text-[#8b8b8b]">
        <KeyboardIcon className="-mt-1 h-[15px] w-4" />
        <span className="ml-1.5 text-xs tracking-[-0.3px]">On-Screen Keyboard</span>
        <div className="-mt-0.5 ml-auto flex items-center gap-9">
          <span className="h-px w-2.5 bg-[#777]" />
          <span className="size-2.5 border border-[#dedede]" />
          <Cross className="size-2.5 text-[#707070]" />
        </div>
      </div>
      <div className="mt-[23px] flex h-[3px] gap-px">
        {keyWidths.map((w, i) => (
          <span key={i} className="h-full shrink-0 bg-[#333]" style={{ width: w }} />
        ))}
      </div>
    </div>
  );
}

export default function App() {
  return (
    <div className="relative flex h-[768px] w-[1366px] flex-col overflow-hidden bg-[#fafafa] font-['Roboto',sans-serif] text-[#212121]">
      <TabStrip />
      <Toolbar />
      <AppBar />
      <div className="flex h-[617px]">
        <Sidebar />
        <Content />
      </div>
      <div className="absolute left-0 top-[699px] z-30 h-[22px] w-[214px] rounded-tr bg-[#1f2120] pl-[5px] pt-[3px] font-['Noto_Sans',sans-serif] text-xs leading-4 tracking-[-0.39px] text-[#c7c7c7]">
        <span className="whitespace-nowrap">192.168.230.1:8080/#/network-servers</span>
      </div>
      <Taskbar />
      <ScreenKeyboard />
    </div>
  );
}
